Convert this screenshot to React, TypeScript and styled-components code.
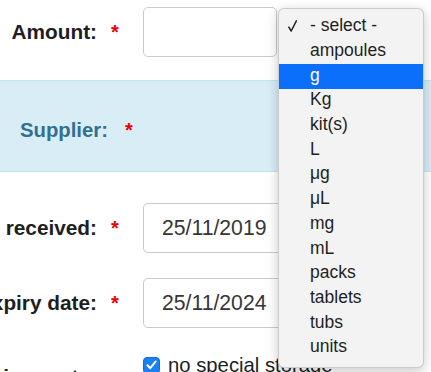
import React from 'react';
import styled, { createGlobalStyle } from 'styled-components';

const GlobalStyle = createGlobalStyle`
  html, body {
    margin: 0;
    padding: 0;
    background: #fff;
    overflow: hidden;
  }
  body {
    font-family: "Liberation Sans", Arial, Helvetica, sans-serif;
  }
`;

const Page = styled.div`
  position: relative;
  width: 431px;
  height: 372px;
  overflow: hidden;
  padding-top: 7px;
  box-sizing: border-box;
`;

const FormRow = styled.div<{ $top?: number; $align?: string }>`
  display: grid;
  grid-template-columns: 97px 46px 1fr;
  align-items: ${p => p.$align || 'center'};
  margin-top: ${p => p.$top ?? 0}px;
`;

const Label = styled.div<{ $padTop?: number }>`
  display: flex;
  justify-content: flex-end;
  min-width: 0;
  white-space: nowrap;
  font-size: 20.8px;
  font-weight: 700;
  line-height: 24px;
  color: #1e1e1e;
  padding-top: ${p => p.$padTop ?? 0}px;
`;

const Star = styled.span`
  padding-left: 14px;
  font-size: 20px;
  font-weight: 700;
  line-height: 24px;
  color: #ee0000;
`;

const Field = styled.input<{ $width: number }>`
  box-sizing: border-box;
  width: ${p => p.$width}px;
  height: 50px;
  padding: 0 0 0 18px;
  border: 1px solid #cacaca;
  border-radius: 5px;
  background: #fff;
  font-family: "Liberation Sans", Arial, sans-serif;
  font-size: 21.2px;
  color: #363636;
  outline: none;
`;

const Band = styled.div`
  display: flex;
  align-items: center;
  box-sizing: border-box;
  height: 92px;
  margin-top: 23px;
  padding: 7px 0 0 20px;
  background: #d9edf7;
  border-top: 1px solid #bce8f1;
  border-bottom: 1px solid #bce8f1;
`;

const BandLabel = styled.span`
  font-size: 20.3px;
  font-weight: 700;
  line-height: 24px;
  color: #31708f;
`;

const BandStar = styled(Star)`
  padding-left: 17px;
`;

const CheckLine = styled.label`
  display: flex;
  align-items: center;
  gap: 8px;
  font-size: 20.3px;
  line-height: 24px;
  color: #1e1e1e;
  white-space: nowrap;
`;

const CheckBox = styled.span`
  display: inline-flex;
  align-items: center;
  justify-content: center;
  width: 17px;
  height: 17px;
  box-sizing: border-box;
  border-radius: 4px;
  background: #1b7ff5;
  border: 1px solid #1669d6;
`;

const Menu = styled.div`
  position: absolute;
  left: 278px;
  top: 8px;
  width: 146px;
  box-sizing: border-box;
  padding: 6px 0;
  background: #f3f3f3;
  border: 1px solid rgba(0, 0, 0, 0.16);
  border-radius: 6px;
  box-shadow: 0 3px 12px rgba(0, 0, 0, 0.22);
`;

const MenuItem = styled.div<{ $active?: boolean }>`
  display: flex;
  align-items: center;
  box-sizing: border-box;
  height: 24.7px;
  padding: 0 0 3px 9px;
  font-size: 17.5px;
  color: ${p => (p.$active ? '#fff' : '#1f1f1f')};
  background: ${p => (p.$active ? '#0b6ffb' : 'transparent')};
`;

const CheckSlot = styled.span`
  display: inline-flex;
  width: 22px;
  align-items: center;
`;

const units = ['ampoules', 'g', 'Kg', 'kit(s)', 'L', 'μg', 'μL', 'mg', 'mL', 'packs', 'tablets', 'tubs', 'units'];

export default function App() {
  return (
    <Page>
      <GlobalStyle />
      <FormRow>
        <Label>Amount:</Label>
        <Star>*</Star>
        <Field $width={134} readOnly value="" />
      </FormRow>

      <Band>
        <BandLabel>Supplier:</BandLabel>
        <BandStar>*</BandStar>
      </Band>

      <FormRow $top={31}>
        <Label>Date received:</Label>
        <Star>*</Star>
        <Field $width={270} readOnly value="25/11/2019" />
      </FormRow>

      <FormRow $top={25}>
        <Label>Expiry date:</Label>
        <Star>*</Star>
        <Field $width={270} readOnly value="25/11/2024" />
      </FormRow>

      <FormRow $top={25} $align="start">
        <Label $padTop={12}>Storage requirements:</Label>
        <span />
        <CheckLine>
          <CheckBox>
            <svg width="11" height="10" viewBox="0 0 11 10">
              <path d="M1.5 5.2 L4.3 8.2 L9.6 1.5" fill="none" stroke="#fff" strokeWidth="2" strokeLinecap="round" strokeLinejoin="round" />
            </svg>
          </CheckBox>
          no special storage
        </CheckLine>
      </FormRow>

      <Menu>
        <MenuItem>
          <CheckSlot>
            <svg width="9" height="12" viewBox="0 0 9 12">
              <path d="M0.8 7.2 L3.2 11 L8.4 0.8" fill="none" stroke="#1f1f1f" strokeWidth="1.5" strokeLinecap="round" strokeLinejoin="round" />
            </svg>
          </CheckSlot>
          - select -
        </MenuItem>
        {units.map(u => (
          <MenuItem key={u} $active={u === 'g'}>
            <CheckSlot />
            {u}
          </MenuItem>
        ))}
      </Menu>
    </Page>
  );
}
